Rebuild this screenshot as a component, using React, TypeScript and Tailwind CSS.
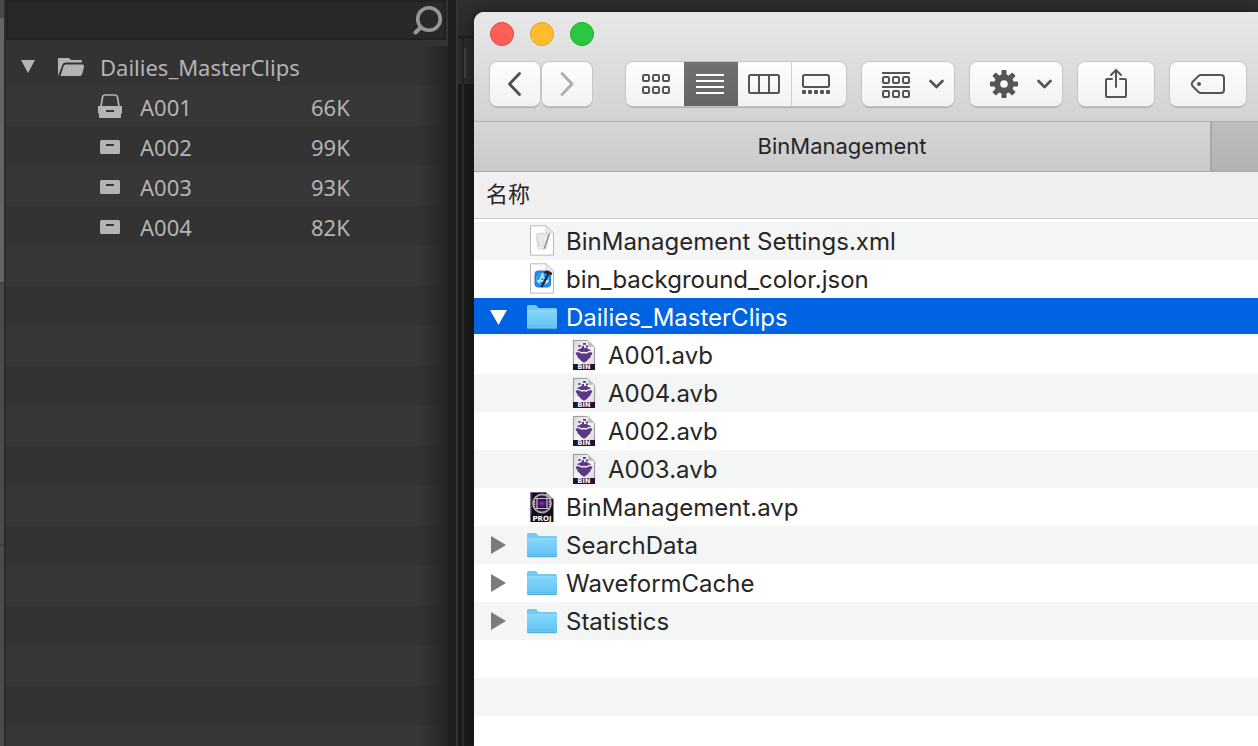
import React from "react";

type Bin = { name: string; size: string; open?: boolean };

const bins: Bin[] = [
  { name: "A001", size: "66K", open: true },
  { name: "A002", size: "99K" },
  { name: "A003", size: "93K" },
  { name: "A004", size: "82K" },
];

type Kind = "xml" | "json" | "folder" | "bin" | "proj";
type Entry = { name: string; kind: Kind; state?: "open" | "closed"; child?: boolean };

const entries: Entry[] = [
  { name: "BinManagement Settings.xml", kind: "xml" },
  { name: "bin_background_color.json", kind: "json" },
  { name: "Dailies_MasterClips", kind: "folder", state: "open" },
  { name: "A001.avb", kind: "bin", child: true },
  { name: "A004.avb", kind: "bin", child: true },
  { name: "A002.avb", kind: "bin", child: true },
  { name: "A003.avb", kind: "bin", child: true },
  { name: "BinManagement.avp", kind: "proj" },
  { name: "SearchData", kind: "folder", state: "closed" },
  { name: "WaveformCache", kind: "folder", state: "closed" },
  { name: "Statistics", kind: "folder", state: "closed" },
];

function BinGlyph({ open }: { open?: boolean }) {
  return (
    <svg width="24" height="24" viewBox="0 0 24 24" fill="#b4b4b4">
      {open ? (
        <>
          <path d="M3 12 4.600 3Q5 1 6.500 1h11q1.500 0 1.900 2L21 12" fill="none" stroke="#b4b4b4" strokeWidth="1.700" />
          <path d="M0 12h24v7.500H23V23q0 1-1 1H2q-1 0-1-1v-3.500H0z" />
          <rect x="8" y="16" width="8" height="2" fill="#363636" />
        </>
      ) : (
        <>
          <rect x="2" y="6" width="20" height="14" rx="1.500" />
          <rect x="8" y="10" width="8" height="2" fill="#363636" />
        </>
      )}
    </svg>
  );
}

function Page() {
  return (
    <>
      <path d="M.5.800h15.500L23.500 8v22.200H.5z" fill="#fff" stroke="#b9b9b9" strokeWidth="1" />
      <path d="M16 .8V8h7.500z" fill="#ebebeb" stroke="#c6c6c6" strokeWidth=".7" />
    </>
  );
}

function FileIcon({ kind, id }: { kind: Kind; id: string }) {
  if (kind === "folder")
    return (
      <svg width="32" height="28" viewBox="0 0 32 28">
        <defs>
          <linearGradient id={id} x1="0" y1="0" x2="0" y2="1">
            <stop offset="0" stopColor="#82d5fb" />
            <stop offset="1" stopColor="#66c4f4" />
          </linearGradient>
        </defs>
        <path d="M1 24V3.500Q1 2 2.500 2h6.700q1 0 1.600.8l1 1.400q.5.800 1.500.800H29.500Q31 5 31 6.500V24z" fill="#74c9f2" />
        <path d="M1 7.500h30V24.500q0 1.300-1.300 1.300H2.300Q1 25.800 1 24.500z" fill={`url(#${id})`} />
        <path d="M1.500 7.800h29" stroke="#a2e0fb" strokeWidth=".8" />
        <path d="M1.300 25.700h29.400" stroke="#4aa5d3" strokeWidth="1" />
        <path d="M1.500 23.300h29" stroke="#58b6e4" strokeWidth=".7" />
      </svg>
    );
  if (kind === "xml")
    return (
      <svg width="25" height="32" viewBox="0 0 25 32">
        <Page />
        <path d="M6 10h12.500l-2 13.500q-4.500 1.500-8.500 0z" fill="#ededee" stroke="#cfcfd0" strokeWidth=".8" />
        <path d="M6 9q6-1.500 12.500 0" fill="none" stroke="#e6c8c8" strokeWidth="1" />
        <path d="M8 11l1.500 11" stroke="#ecc6c6" strokeWidth="1" />
        <path d="M13 12v10" stroke="#dadadb" strokeWidth="1" />
        <path d="M19.500 8.500l-4.500 13" stroke="#8c96a3" strokeWidth="1.600" />
        <path d="M15 21.500l-.8 2" stroke="#555" strokeWidth="1" />
      </svg>
    );
  if (kind === "json")
    return (
      <svg width="25" height="32" viewBox="0 0 25 32">
        <Page />
        <rect x="5" y="8" width="15.500" height="16" rx="3" fill="#1d8df0" stroke="#2478c4" />
        <circle cx="12.700" cy="16" r="5.800" fill="none" stroke="#69baf8" strokeWidth=".8" />
        <path d="M13 10.500 8.500 20M11.500 11l5.500 9.500M7 18h11.500" stroke="#b8e2ff" strokeWidth="1.800" />
        <path d="M19 9.500 11.500 24" stroke="#17283b" strokeWidth="2.200" />
        <path d="M14 9q2.500-2 5.500-.5l3 1.500-1 2.200-3-1.500-4 .1z" fill="#20252b" />
      </svg>
    );
  if (kind === "bin")
    return (
      <svg width="24" height="32" viewBox="0 0 24 32">
        <defs>
          <linearGradient id={id} x1="0" y1="0" x2="1" y2="1">
            <stop offset="0" stopColor="#d5d5d7" />
            <stop offset=".5" stopColor="#f8f8f8" />
            <stop offset="1" stopColor="#cfcfd1" />
          </linearGradient>
        </defs>
        <path d="M1 1h15l7 7v23H1z" fill={`url(#${id})`} />
        <path d="M1.400 31V1.400H16l6.600 6.600V31" fill="none" stroke="#8f8d92" strokeWidth=".9" />
        <path d="M16 1v7h7z" fill="#b8b7ba" stroke="#e8e8e8" strokeWidth=".8" />
        <g fill="#5c3785">
          <rect x="6.500" y="6" width="2" height="2" />
          <rect x="11" y="4" width="3" height="1.800" />
          <rect x="10" y="7" width="2" height="2" />
          <rect x="14" y="6.500" width="2" height="2" />
          <path d="M5 13q0-3 3-3 1.500-1.800 4-.8 2.500-1 4 .8 3 0 3 3z" />
          <path d="M3.700 13.500q2-1 4.300 0 2 1.600 4 0 2 1.600 4 0 2.300-1 4.300 0 0 2.200-1.600 3.200.2 2-1.900 3Q15 22.500 12 23.800q-3-1.300-4.800-4.100-2.100-1-1.900-3-1.600-1-1.600-3.200z" />
        </g>
        <path d="M4.500 13q2-1.500 3.700.2 1.800 1.800 3.800 0 2 1.800 3.800 0 1.700-1.700 3.700-.2" fill="none" stroke="#efe8f6" strokeWidth="1.200" />
        <rect x="1" y="25" width="22" height="6" fill="#25103a" />
        <text x="12" y="30.300" textAnchor="middle" fontSize="6.500" fontWeight="700" fill="#fff" fontFamily="DejaVu Sans, sans-serif">BIN</text>
      </svg>
    );
  return (
    <svg width="25" height="32" viewBox="0 0 25 32">
      <defs>
        <radialGradient id={id}>
          <stop offset="0" stopColor="#8630b9" />
          <stop offset="1" stopColor="#32104f" />
        </radialGradient>
      </defs>
      <path d="M.5 1H16l7.500 7v23H.5z" fill="#160b20" />
      <path d="M1 31V1.500H16" fill="none" stroke="#675d70" />
      <path d="M16 1v7h7.500z" fill="#b7b4b9" />
      <circle cx="12" cy="12.500" r="9" fill="#2a1837" stroke="#aaa4b0" strokeWidth="1.800" />
      <rect x="7" y="8.500" width="10" height="8" fill={`url(#${id})`} />
      <path d="M5 7.500h14M5 17.500h14M7 7v11M17 7v11" stroke="#c7c2ca" strokeWidth="1.200" />
      <path d="M4.500 10v6M19.500 10v6" stroke="#cfcad2" strokeWidth="1.500" strokeDasharray="1.500 1" />
      <rect x="1" y="23" width="22" height="8" fill="#160b20" />
      <text x="12" y="30" textAnchor="middle" fontSize="7" fontWeight="700" fill="#fff" fontFamily="DejaVu Sans, sans-serif">PROJ</text>
    </svg>
  );
}

const btn =
  "flex h-[44px] items-center justify-center bg-linear-to-b from-[#fdfdfd] to-[#f2f2f2] text-[#555555] shadow-[0_0_0_1px_#c6c6c6,0_2px_0_0_#b0b0b0]";
const seg = "flex items-center justify-center text-[#555555]";

function Squares({ y }: { y: number }) {
  return (
    <>
      {[1, 11, 21].map((x) => (
        <rect key={x} x={x} y={y} width="6" height="6" rx="1.200" />
      ))}
    </>
  );
}

function Chevron() {
  return (
    <svg width="16" height="10" viewBox="0 0 16 10" fill="none" stroke="currentColor" strokeWidth="2.600" strokeLinecap="round" strokeLinejoin="round">
      <path d="M2.500 2 8.500 8l6-6" />
    </svg>
  );
}

function Toolbar() {
  return (
    <div className="flex h-[44px]">
      <div className="flex shrink-0 gap-[2px]">
        <button aria-label="Back" className={`${btn} w-[50px] rounded-[7px]`}>
          <svg width="16" height="26" viewBox="0 0 16 26" fill="none" stroke="#4f4f4f" strokeWidth="2.800" strokeLinecap="round" strokeLinejoin="round">
            <path d="M12.500 2.500 2.500 13l10 10.500" />
          </svg>
        </button>
        <button aria-label="Forward" className={`${btn} w-[50px] rounded-[7px]`}>
          <svg width="16" height="26" viewBox="0 0 16 26" fill="none" stroke="#adadad" strokeWidth="2.800" strokeLinecap="round" strokeLinejoin="round">
            <path d="M3 2.500 13 13 3 23.500" />
          </svg>
        </button>
      </div>
      <div className="flex min-w-0 flex-1 gap-4 pl-[34px]">
        <div className={`${btn} w-[220px] shrink-0 items-stretch! rounded-[7px]`}>
          <button aria-label="Icons" className={`${seg} w-[58px] pl-[2px]`}>
            <svg width="28" height="20" viewBox="0 0 28 20" fill="none" stroke="currentColor" strokeWidth="2">
              <Squares y={1} />
              <Squares y={13} />
            </svg>
          </button>
          <button aria-label="List" className="flex w-[54px] items-center justify-center bg-linear-to-b from-[#717171] to-[#646464] pr-[2px] text-white">
            <svg width="28" height="20" viewBox="0 0 28 20" stroke="currentColor" strokeWidth="2">
              <path d="M0 1h28M0 7h28M0 13h28M0 19h28" />
            </svg>
          </button>
          <button aria-label="Columns" className={`${seg} w-[54px] border-r border-[#cfcfcf] pr-px`}>
            <svg width="32" height="20" viewBox="0 0 32 20" fill="none" stroke="currentColor" strokeWidth="2">
              <rect x="1" y="1" width="30" height="18" rx="1.500" />
              <path d="M11 1v18M21 1v18" />
            </svg>
          </button>
          <button aria-label="Gallery" className={`${seg} w-[54px] pr-[6px]`}>
            <svg width="28" height="20" viewBox="0 0 28 20" fill="none" stroke="currentColor" strokeWidth="2">
              <rect x="1" y="1" width="26" height="12" rx="1.500" />
              {[0, 6, 12, 18, 24].map((x) => (
                <rect key={x} x={x} y="16" width="4" height="4" rx="1" fill="currentColor" stroke="none" />
              ))}
            </svg>
          </button>
        </div>
        <button aria-label="Group" className={`${btn} w-[92px] shrink-0 gap-[18px] rounded-[7px] pl-[10px]`}>
          <svg className="mt-[2px]" width="28" height="26" viewBox="0 0 28 26" fill="none" stroke="currentColor" strokeWidth="2">
            <path d="M0 1h28M0 15h28" />
            <Squares y={5} />
            <Squares y={19} />
          </svg>
          <Chevron />
        </button>
        <button aria-label="Actions" className={`${btn} w-[92px] shrink-0 gap-[18px] rounded-[7px] pl-[10px]`}>
          <svg width="28" height="28" viewBox="0 0 28 28" fill="none" stroke="currentColor">
            <circle cx="14" cy="14" r="6.800" strokeWidth="6" />
            {[0, 45, 90, 135, 180, 225, 270, 315].map((a) => (
              <path key={a} d="M11.500 5V.8Q11.500 0 12.300 0h3.400q.8 0 .8.800V5z" fill="currentColor" stroke="none" transform={`rotate(${a} 14 14)`} />
            ))}
          </svg>
          <Chevron />
        </button>
        <button aria-label="Share" className={`${btn} w-[76px] shrink-0 rounded-[7px]`}>
          <svg className="-mt-[2px]" width="24" height="32" viewBox="0 0 24 32" fill="none" stroke="currentColor" strokeWidth="2" strokeLinecap="round">
            <path d="M8 12H3q-1 0-1 1v16q0 1 1 1h18q1 0 1-1V13q0-1-1-1h-5" />
            <path d="M12 20V3M7 8l5-5 5 5" />
          </svg>
        </button>
        <button aria-label="Tags" className={`${btn} w-[76px] shrink-0 rounded-[7px]`}>
          <svg width="36" height="22" viewBox="0 0 36 22" fill="none" stroke="currentColor" strokeWidth="2">
            <path d="M11 2h20q3 0 3 3v12q0 3-3 3H11q-1.500 0-2.500-1L2.500 13q-1.500-2 0-4l6-6Q9.500 2 11 2z" />
            <circle cx="9" cy="11" r="2" fill="currentColor" stroke="none" />
          </svg>
        </button>
      </div>
    </div>
  );
}

function BinPanel() {
  return (
    <aside className="flex w-[444px] shrink-0 flex-col border-l-2 border-[#2c2c2c] bg-[#333333] font-['Noto_Sans',sans-serif] text-[22px] text-[#b4b4b4]">
      <label className="mr-[2px] flex h-[40px] shrink-0 items-center border-2 border-[#212121] bg-[#292929]">
        <input aria-label="Search bins" className="h-full min-w-0 flex-1 bg-transparent px-2 outline-none" />
        <svg className="mr-px shrink-0" width="30" height="30" viewBox="0 0 30 30" fill="none" stroke="#969696" strokeLinecap="round">
          <circle cx="16" cy="14" r="11.300" strokeWidth="3.600" />
          <path d="M7.500 22.500 2.500 27.500" strokeWidth="4" />
        </svg>
      </label>
      <div className="relative mt-[6px] flex flex-1 flex-col">
        <table className="w-full table-fixed border-collapse">
          <colgroup>
            <col className="w-[305px]" />
            <col />
          </colgroup>
          <tbody>
            <tr className="h-[40px] bg-[#333333]">
              <td colSpan={2} className="p-0">
                <div className="flex h-[40px] items-center pt-[2px] pl-[15px]">
                  <button aria-label="Collapse Dailies_MasterClips" className="flex w-[14px] items-center pb-[2px]">
                    <svg width="14" height="13" viewBox="0 0 14 13">
                      <path d="M0 0h14L7 13z" fill="#b4b4b4" />
                    </svg>
                  </button>
                  <svg className="ml-[23px]" width="26" height="18" viewBox="0 0 26 18" fill="#b4b4b4">
                    <path d="M0 18V1q0-1 1-1h10l2 2h10q1 0 1 1v1.500H7.500Q5 4.500 4.300 7z" />
                    <path d="M2.500 18 5.500 8.500Q6 6.500 8 6.500h16q2.500 0 2 2.500l-1.800 7q-.6 2-2.700 2z" />
                  </svg>
                  <span className="ml-4">Dailies_MasterClips</span>
                </div>
              </td>
            </tr>
            {bins.map((b, i) => (
              <tr key={b.name} className={i % 2 ? "h-[40px] bg-[#333333]" : "h-[40px] bg-[#373737]"}>
                <td className="p-0">
                  <div className="flex h-[40px] items-center gap-[18px] pt-[2px] pl-[92px]">
                    <span className="-mt-[2px]">
                      <BinGlyph open={b.open} />
                    </span>
                    {b.name}
                  </div>
                </td>
                <td className="p-0 pt-[2px]">{b.size}</td>
              </tr>
            ))}
          </tbody>
        </table>
        <div className="flex-1 bg-[repeating-linear-gradient(to_bottom,#373737_0_40px,#333333_40px_80px)]" />
        <div className="pointer-events-none absolute inset-y-0 right-0 w-[30px] bg-linear-to-r from-transparent to-[#242424]" />
      </div>
    </aside>
  );
}

function Finder() {
  return (
    <main className="mt-3 flex min-w-0 flex-1 flex-col overflow-hidden rounded-tl-[10px] bg-white font-[Inter,'Noto_Sans_CJK_SC',sans-serif] text-[#262626] shadow-[0_0_16px_rgba(0,0,0,0.5)]">
      <header className="flex h-[110px] shrink-0 flex-col gap-4 border-b border-[#b0b0b0] bg-linear-to-b from-[#e8e8e8] to-[#d2d2d2] pt-[10px] pl-4">
        <div className="flex h-6 gap-4">
          <button aria-label="Close" className="size-6 rounded-full border border-[#e2463f] bg-[#ff5f57]" />
          <button aria-label="Minimize" className="size-6 rounded-full border border-[#e0a123] bg-[#ffbd2e]" />
          <button aria-label="Zoom" className="size-6 rounded-full border border-[#1aab29] bg-[#28c940]" />
        </div>
        <Toolbar />
      </header>
      <div className="flex h-[50px] shrink-0 border-b border-[#a9a9a9] bg-linear-to-b from-[#d6d6d6] to-[#cacaca]">
        <h1 className="flex flex-1 items-center justify-center text-[22px]">BinManagement</h1>
        <div className="w-12 border-l-2 border-[#a8a8a8] bg-linear-to-b from-[#bdbdbd] to-[#b3b3b3]" />
      </div>
      <table className="w-full border-collapse">
        <thead>
          <tr className="h-[46px] bg-[#f0f0f0]">
            <th className="border-b border-[#c8c8c8] p-0 pl-3 text-left text-[22px] font-normal">名称</th>
          </tr>
        </thead>
        <tbody className="text-2xl">
          <tr className="h-1" aria-hidden="true">
            <td className="p-0" />
          </tr>
          {entries.map((e, i) => {
            const selected = e.state === "open";
            return (
              <tr key={e.name} className={i % 2 ? "bg-white" : "bg-[#f4f5f5]"}>
                <td className="h-[38px] p-0">
                  <div className={selected ? "mb-[2px] flex h-[36px] items-center bg-[#0063e1] pt-[2px] pl-4 text-white" : "flex h-[38px] items-center pl-4"}>
                    <div className="flex w-4 shrink-0">
                      {e.state && (
                        <button aria-label={`Toggle ${e.name}`} className="flex">
                          {selected ? (
                            <svg width="17" height="15" viewBox="0 0 17 15">
                              <path d="M0 0h17L8.500 15z" fill="#fff" />
                            </svg>
                          ) : (
                            <svg width="16" height="18" viewBox="0 0 16 18">
                              <path d="M1 0v18l15-9z" fill="#7b7b7b" />
                            </svg>
                          )}
                        </button>
                      )}
                    </div>
                    <div className={e.child ? "ml-[62px] flex w-8 justify-center" : "ml-5 flex w-8 justify-center"}>
                      <FileIcon kind={e.kind} id={`fi${i}`} />
                    </div>
                    <span className="mt-[2px] ml-2">{e.name}</span>
                  </div>
                </td>
              </tr>
            );
          })}
        </tbody>
      </table>
      <div className="flex-1 bg-[repeating-linear-gradient(to_bottom,#ffffff_0_38px,#f4f5f5_38px_76px)]" />
    </main>
  );
}

export default function App() {
  return (
    <div className="flex h-screen overflow-hidden bg-[#1f1f1f]">
      <div className="flex w-1 shrink-0 flex-col bg-[#4b4b4b]">
        <div className="h-[18px] bg-[#484848]" />
        <div className="h-[264px] bg-[#656565]" />
        <div className="h-[2px] bg-[#3e3e3e]" />
        <div className="h-[260px]" />
        <div className="h-[2px] bg-[#3e3e3e]" />
      </div>
      <BinPanel />
      <div className="w-2 shrink-0 bg-[#1f1f1f]" />
      <div className="relative flex min-w-0 flex-1 border-l-2 border-[#353535] bg-linear-to-b from-[#303030] from-0% to-[#2b2b2b] to-5%">
        <div className="mt-9 flex w-4 shrink-0 flex-col border-t-2 border-[#1e1e1e]">
          <div className="ml-[4px] h-[46px] border-l-2 border-[#222222] bg-[#2c2c2c] pt-[10px]">
            <div className="h-[30px] w-[2px] bg-[#404040]" />
          </div>
          <div className="flex-1 bg-[#1c1c1c] pl-[4px]">
            <div className="h-full w-[2px] bg-[#2d2d2d]" />
          </div>
        </div>
        <Finder />
      </div>
    </div>
  );
}
